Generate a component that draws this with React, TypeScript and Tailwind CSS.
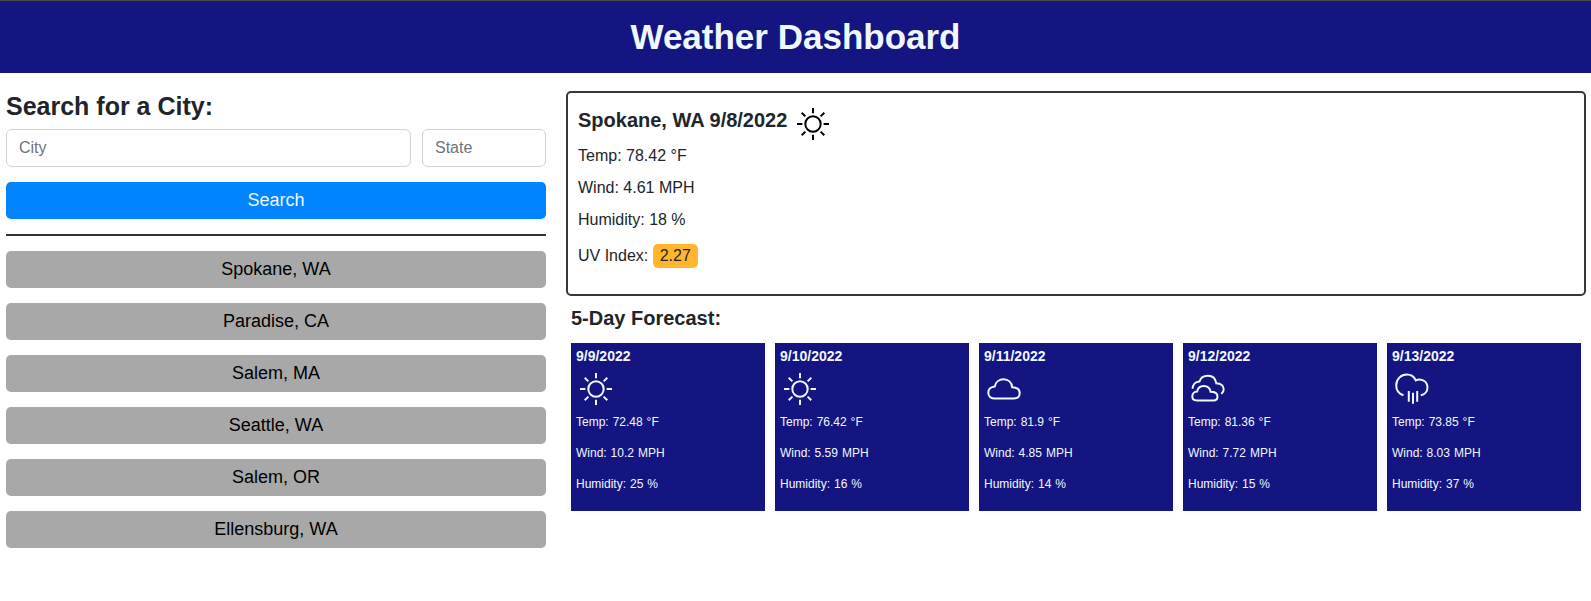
import type { ReactNode } from "react";

type IconKind = "sun" | "cloud" | "clouds" | "rain";

const shapes: Record<IconKind, ReactNode> = {
  sun: (
    <>
      <circle cx="20" cy="20" r="7.7" />
      <path d="M20 4v5.2M20 30.8V36M4 20h5.4M30.6 20H36M8.7 8.7l3.7 3.7M27.6 27.6l3.7 3.7M8.7 31.3l3.7-3.7M27.6 12.4l3.7-3.7" />
    </>
  ),
  cloud: (
    <path d="M10 29.4C6.5 29.4 4.3 27 4.3 23.6C4.3 20.3 7 17.6 10.8 17.4C11.6 13 15.3 10.3 19.6 10.3C24.3 10.3 27.7 13.6 28.2 18.3C32.8 18.5 35.7 20.8 35.7 24C35.7 27.3 33.5 29.4 30.3 29.4Z" />
  ),
  clouds: (
    <>
      <path d="M8.8 31.4C6 31.4 4.3 29.8 4.3 27.2C4.3 24.6 6.4 22.6 9.2 22.4C9.8 19 12.4 17 15.7 17C19.2 17 22 19.3 22.6 22.8C26.6 22.8 29.5 24.4 29.5 27.4C29.5 30 27.8 31.4 25.5 31.4Z" />
      <path d="M4.6 19.8C4.6 15.6 7.4 12.6 11.5 12.4C12.6 8.8 16 6.7 20 6.7C24.5 6.7 27.6 9.6 28.3 14.2C33 14.4 35.7 17 35.7 20.3C35.7 22.3 34.8 23.8 33.3 24.8" />
    </>
  ),
  rain: (
    <>
      <path d="M11.5 26.2C6.8 24.6 4.2 21 4.2 16.4C4.2 10 9 5.6 15 5.6C19 5.6 22 7.7 23.8 11.4C25 10.7 26 10.4 27.4 10.4C32 10.4 35.5 13.8 35.5 18.2C35.5 22.6 32.6 25.6 28.8 26.2" />
      <path d="M16.8 22v10.8M21 23.8v11M25.2 22v10.8" />
    </>
  ),
};

function WeatherIcon({ kind, className = "" }: { kind: IconKind; className?: string }) {
  return (
    <svg
      viewBox="0 0 40 40"
      className={`size-10 shrink-0 fill-none stroke-current stroke-2 ${className}`}
    >
      {shapes[kind]}
    </svg>
  );
}

const cities = ["Spokane, WA", "Paradise, CA", "Salem, MA", "Seattle, WA", "Salem, OR", "Ellensburg, WA"];

const forecast: { date: string; icon: IconKind; temp: string; wind: string; humidity: string }[] = [
  { date: "9/9/2022", icon: "sun", temp: "72.48", wind: "10.2", humidity: "25" },
  { date: "9/10/2022", icon: "sun", temp: "76.42", wind: "5.59", humidity: "16" },
  { date: "9/11/2022", icon: "cloud", temp: "81.9", wind: "4.85", humidity: "14" },
  { date: "9/12/2022", icon: "clouds", temp: "81.36", wind: "7.72", humidity: "15" },
  { date: "9/13/2022", icon: "rain", temp: "73.85", wind: "8.03", humidity: "37" },
];

export default function App() {
  return (
    <div className="min-h-screen bg-white font-['Liberation_Sans',Arial,sans-serif] text-base text-[#212529]">
      <header className="flex h-[73px] items-center justify-center border-t border-[#4a4a4a] bg-[#151582] pb-0.5">
        <h1 className="text-[35px] leading-none font-bold text-[#f0f8ff]">Weather Dashboard</h1>
      </header>

      <main className="flex pr-[5px] pl-1.5">
        <aside className="w-[540px] shrink-0 pt-[18px]">
          <h2 className="mb-2 text-[25px] leading-[30px] font-bold">Search for a City:</h2>
          <form onSubmit={(e) => e.preventDefault()}>
            <div className="flex gap-[11px]">
              <input
                placeholder="City"
                className="h-[38px] w-[405px] rounded-md border border-[#ced4da] px-3 placeholder:text-[#6c757d]"
              />
              <input
                placeholder="State"
                className="h-[38px] w-[124px] rounded-md border border-[#ced4da] px-3 placeholder:text-[#6c757d]"
              />
            </div>
            <button className="mt-[15px] block h-[37px] w-full rounded-[5px] bg-[#0084ff] pb-0.5 text-lg text-[#f0f8ff]">
              Search
            </button>
          </form>
          <hr className="my-[15px] border-t-2 border-[#333]" />
          <div className="flex flex-col gap-[15px]">
            {cities.map((city) => (
              <button key={city} className="h-[37px] rounded-[5px] bg-[#a8a8a8] pb-0.5 text-lg text-black">
                {city}
              </button>
            ))}
          </div>
        </aside>

        <section className="ml-5 flex-1 pt-[18px]">
          <div className="h-[205px] rounded-[5px] border-2 border-[#383838] px-2.5 pt-[11px]">
            <div className="flex h-10 items-start gap-1.5">
              <h3 className="pt-1 text-xl leading-6 font-bold">Spokane, WA 9/8/2022</h3>
              <WeatherIcon kind="sun" className="text-black" />
            </div>
            <div className="flex flex-col gap-2">
              <p>Temp: 78.42 °F</p>
              <p>Wind: 4.61 MPH</p>
              <p>Humidity: 18 %</p>
            </div>
            <p className="mt-3">
              UV Index: <span className="inline-block rounded-[5px] bg-[#ffb52e] px-[7px]">2.27</span>
            </p>
          </div>

          <div className="px-[5px]">
            <h3 className="mt-2.5 mb-[13px] text-xl leading-6 font-bold">5-Day Forecast:</h3>
            <div className="grid grid-cols-5 gap-2.5">
              {forecast.map((day) => (
                <article key={day.date} className="h-[168px] bg-[#151582] px-[5px] pt-[5px] text-[#f0f8ff]">
                  <h4 className="mb-1 text-sm leading-[17px] font-bold">{day.date}</h4>
                  <WeatherIcon kind={day.icon} />
                  <div className="mt-1 flex flex-col gap-[13px] text-xs leading-[18px] [word-spacing:0.6px]">
                    <p>Temp: {day.temp} °F</p>
                    <p>Wind: {day.wind} MPH</p>
                    <p>Humidity: {day.humidity} %</p>
                  </div>
                </article>
              ))}
            </div>
          </div>
        </section>
      </main>
    </div>
  );
}
